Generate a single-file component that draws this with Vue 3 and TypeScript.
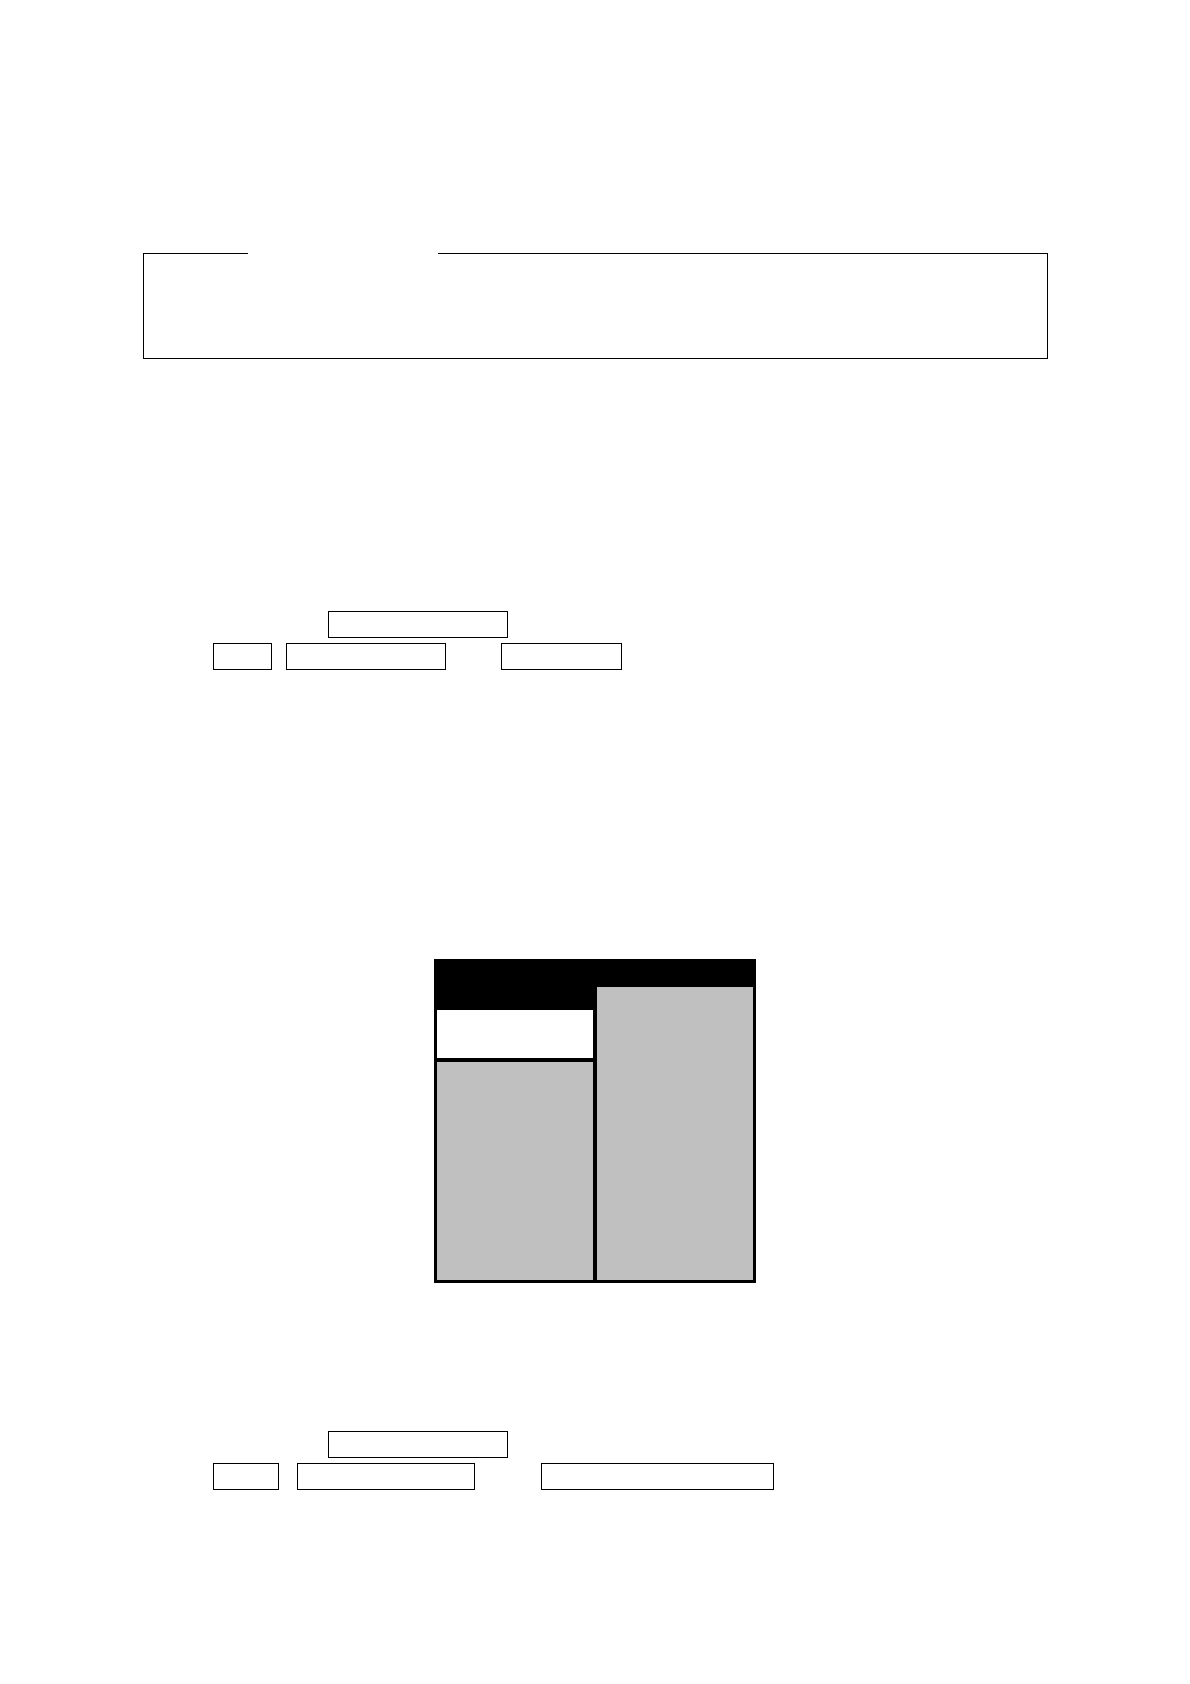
<script setup lang="ts">
interface Box {
  width: number
  gap: number
}

interface BoxGroup {
  id: string
  rows: Box[][]
}

const upper: BoxGroup = {
  id: 'upper',
  rows: [
    [{ gap: 115, width: 180 }],
    [
      { gap: 0, width: 59 },
      { gap: 14, width: 160 },
      { gap: 55, width: 121 },
    ],
  ],
}

const lower: BoxGroup = {
  id: 'lower',
  rows: [
    [{ gap: 115, width: 180 }],
    [
      { gap: 0, width: 66 },
      { gap: 18, width: 178 },
      { gap: 66, width: 233 },
    ],
  ],
}
</script>

<template>
  <main class="page">
    <fieldset class="frame">
      <legend class="frame-title"></legend>
    </fieldset>

    <section class="boxes upper">
      <div v-for="(row, r) in upper.rows" :key="r" class="row">
        <span
          v-for="(box, b) in row"
          :key="b"
          class="box"
          :style="{ width: box.width + 'px', marginLeft: box.gap + 'px' }"
        ></span>
      </div>
    </section>

    <section class="panel">
      <div class="column left">
        <div class="cell white"></div>
        <div class="cell gray"></div>
      </div>
      <div class="column right">
        <div class="cell gray"></div>
      </div>
    </section>

    <section class="boxes lower">
      <div v-for="(row, r) in lower.rows" :key="r" class="row">
        <span
          v-for="(box, b) in row"
          :key="b"
          class="box"
          :style="{ width: box.width + 'px', marginLeft: box.gap + 'px' }"
        ></span>
      </div>
    </section>
  </main>
</template>

<style>
body {
  margin: 0;
  background: #fff;
}
</style>

<style scoped>
.page {
  box-sizing: border-box;
  display: flex;
  flex-direction: column;
  padding: 253px 0 194px;
  font-family: "Liberation Serif", serif;
}

.frame {
  box-sizing: border-box;
  min-width: 0;
  min-height: 106px;
  margin: 0 142px 0 143px;
  padding: 0 0 0 104px;
  border: 1px solid #000;
}

.frame-title {
  box-sizing: border-box;
  width: 190px;
  height: 1px;
  padding: 0;
}

.boxes {
  display: flex;
  flex-direction: column;
  gap: 5px;
  margin-left: 213px;
}

.upper {
  margin-top: 252px;
}

.lower {
  margin-top: 148px;
}

.row {
  display: flex;
}

.box {
  box-sizing: border-box;
  flex: none;
  height: 27px;
  border: 1px solid #000;
}

.panel {
  box-sizing: border-box;
  display: grid;
  grid-template-columns: 1fr 1fr;
  gap: 4px;
  width: 322px;
  min-height: 324px;
  margin: 289px auto 0;
  padding: 3px;
  background: #000;
}

.column {
  display: flex;
  flex-direction: column;
  gap: 4px;
}

.left {
  padding-top: 48px;
}

.right {
  padding-top: 25px;
}

.white {
  height: 48px;
  background: #fff;
}

.gray {
  flex: 1;
  background: #c0c0c0;
}
</style>
